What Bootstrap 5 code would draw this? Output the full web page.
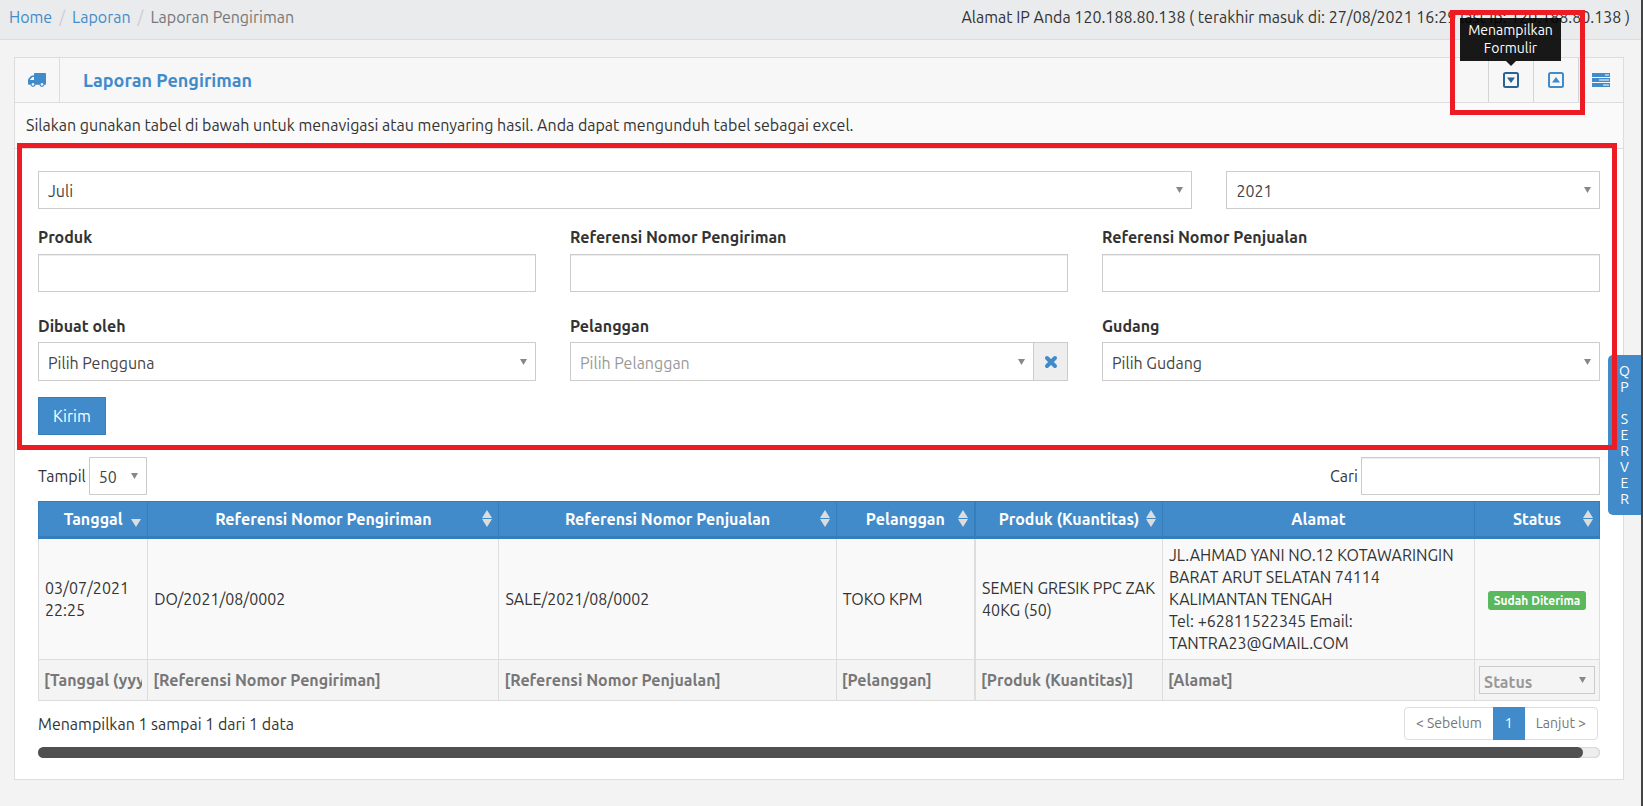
<!DOCTYPE html>
<html lang="id">
<head>
<meta charset="utf-8">
<meta name="viewport" content="width=device-width, initial-scale=1">
<title>Laporan Pengiriman</title>
<link href="https://cdn.jsdelivr.net/npm/bootstrap@5.3.0/dist/css/bootstrap.min.css" rel="stylesheet">
<style>
:root { --blue: #428bca; --blue-dark: #357ebd; --line: #dbdee0; --field: #ccc; }
body { font-family: Ubuntu, "Noto Sans", sans-serif; font-size: 16px; line-height: 22px; color: #333; background: #f3f3f3; border-right: 2px solid #444; min-height: 100vh; }
a { color: var(--blue); text-decoration: none; }
svg { display: block; }

.topbar { background: #e9ebec; border-bottom: 1px solid var(--line); padding: 6px 11px 6px 9px; height: 40px; }
.breadcrumb { --bs-breadcrumb-item-padding-x: 7px; --bs-breadcrumb-divider-color: #ccc; --bs-breadcrumb-item-active-color: #777; }

.panel { background: #fff; border: 1px solid var(--line); margin: 17px 17px 24px 14px; }
.panel-top { background: #f7f7f7; border-bottom: 1px solid var(--line); height: 45px; }
.panel-top h1 { font-size: 18px; line-height: 22px; font-weight: 700; color: var(--blue); padding-left: 23px; }
.tool { width: 45px; height: 44px; display: flex; align-items: center; justify-content: center; border: 0; border-left: 1px solid #d3d5d7; background: none; color: var(--blue); padding: 0; position: relative; }
.tool.first { border-left: 0; border-right: 1px solid var(--line); }
.tool.hovered { color: #2a6496; }
.intro { background: #fafafa; border-bottom: 1px solid var(--line); padding: 11px; height: 46px; }
.panel-main { padding: 22px 23px 21px 23px; }

.filter-form { display: grid; grid-template-columns: repeat(3, 1fr); column-gap: 34px; position: relative; }
.period { grid-column: 1 / -1; display: grid; grid-template-columns: 309fr 100fr; column-gap: 34px; margin-bottom: 17px; }
.form-label { font-weight: 700; line-height: 22px; margin-bottom: 6px; display: block; }
.form-control, .form-select { border: 1px solid var(--field); border-radius: 0; font-size: 16px; line-height: 22px; height: 38px; padding: 8px 9px 6px; color: #444; }
.form-control { box-shadow: inset 0 1px 1px rgba(0,0,0,.075); }
.form-select { background-image: url("data:image/svg+xml,%3Csvg xmlns='http://www.w3.org/2000/svg' viewBox='0 0 7 6'%3E%3Cpath d='M0 0h7L3.500 6z' fill='%23888'/%3E%3C/svg%3E"); background-size: 7px 6px; background-position: right 8px center; }
.text-row { margin-bottom: 23px; }
.pick-row { margin-bottom: 16px; }
.pick-row .form-label { margin-bottom: 5px; }
.pick-row .form-select { height: 39px; }
.is-empty { color: #999; }
.clear-btn { border: 1px solid var(--field); background: #eee; color: var(--blue); width: 35px; margin-left: -1px; padding: 0; display: flex; align-items: center; justify-content: center; }
.btn-send { --bs-btn-bg: #428bca; --bs-btn-color: #fff; --bs-btn-border-color: #357ebd; --bs-btn-border-radius: 0; --bs-btn-font-size: 16px; --bs-btn-line-height: 22px; --bs-btn-padding-x: 14px; --bs-btn-padding-y: 7px; }

.table-tools { margin: 22px 0 6px; height: 38px; }
.table-tools > div { gap: 3px; }
.length-select { width: 58px; }
.search-input { width: 239px; }

.report { table-layout: fixed; width: 100%; margin: 0; border-collapse: collapse; font-size: 16px; }
.report th, .report td { border: 1px solid #ddd; padding: 5px; vertical-align: middle; }
.report thead th { background: var(--blue); color: #fff; border-color: var(--blue-dark); border-bottom-width: 3px; text-align: center; padding: 6px 5px; }
.report tbody td { background: #f9f9f9; color: #333; padding: 5px 6px; }
.report tfoot th { background: #f4f4f4; padding: 6px 5px; height: 41px; }
.report .gap-left { border-left-width: 2px; }
.sort-cell { position: relative; }
.sort-cell .sort-icon { position: absolute; right: 6px; top: 8px; }
.foot-input { border: 0; background: none; width: 100%; padding: 0; font-weight: 700; color: #777; }
.foot-input::placeholder { color: #777; opacity: 1; }
.foot-select { height: 28px; padding: 4px 4px 2px; background-color: transparent; font-weight: 700; color: #999; }
.report .pick-cell { padding: 6px 4px; }
.tag { background: #5cb85c; font-size: 12px; line-height: 12px; padding: 4px 6px 3px; border-radius: 3px; }

.table-foot { margin-top: 6px; height: 33px; }
.pagination { --bs-pagination-font-size: 14px; --bs-pagination-color: #777; --bs-pagination-padding-x: 11px; --bs-pagination-padding-y: 5px; --bs-pagination-border-color: #ddd; --bs-pagination-active-bg: #428bca; --bs-pagination-active-border-color: #428bca; --bs-pagination-border-radius: 4px; margin: 0 2px 0 0; }
.page-link { line-height: 21px; }
.track { height: 11px; border-radius: 6px; background: #eee; box-shadow: inset 0 0 2px rgba(0,0,0,.3); margin-top: 7px; }
.thumb { height: 11px; border-radius: 6px; background: #505050; }

.tip { position: absolute; bottom: 41px; left: 50%; width: 101px; margin-left: -51px; background: rgba(0,0,0,.9); color: #fff; font-size: 14px; line-height: 18px; padding: 3px 8px 4px; text-align: center; z-index: 3; }
.tip::after { content: ""; position: absolute; top: 100%; left: 50%; margin-left: -5px; border: 5px solid transparent; border-top-color: rgba(0,0,0,.9); border-bottom: 0; }
.marker { position: absolute; border: 5px solid #ed1c24; pointer-events: none; z-index: 5; }
.marker-form { inset: -28px -17px -15px -21px; }
.marker-tools { width: 135px; height: 105px; right: 38px; top: -48px; }
.side-tab { position: absolute; right: 0; top: 355px; width: 33px; height: 160px; border: 0; border-radius: 5px 0 0 5px; background: var(--blue); color: #fff; font-size: 14px; line-height: 16px; padding: 0; white-space: pre-line; z-index: 2; }
</style>
</head>
<body class="position-relative">

<header class="topbar d-flex justify-content-between align-items-start">
  <nav aria-label="breadcrumb">
    <ol class="breadcrumb mb-0">
      <li class="breadcrumb-item"><a href="#">Home</a></li>
      <li class="breadcrumb-item"><a href="#">Laporan</a></li>
      <li class="breadcrumb-item active" aria-current="page">Laporan Pengiriman</li>
    </ol>
  </nav>
  <div>Alamat IP Anda 120.188.80.138 ( terakhir masuk di: 27/08/2021 16:29 last ip: 120.188.80.138 )</div>
</header>

<main class="panel">
  <div class="panel-top d-flex align-items-center position-relative">
    <span class="tool first">
      <svg width="18" height="15" viewBox="0 0 18 15" fill="currentColor"><path fill-rule="evenodd" d="M7 0h10.200q.8 0 .8.800V11q0 .8-.8.800h-.7a2.600 2.600 0 0 1-5.100 0H7.600a2.600 2.600 0 0 1-5.100 0H1.200Q0 11.800 0 11V7.200Q0 6 .8 5.200l2-2Q3.500 2.500 4.500 2.500H6V1q0-1 1-1zM2 7h4V4H4.500L2 6.500zM5 10a1.400 1.400 0 1 0 .01 0zM14 10a1.400 1.400 0 1 0 .01 0z"/></svg>
    </span>
    <h1 class="mb-0 me-auto">Laporan Pengiriman</h1>
    <button type="button" class="tool hovered" aria-label="Menampilkan Formulir">
      <svg width="16" height="16" viewBox="0 0 16 16"><rect x="1" y="1" width="14" height="14" rx="1.500" fill="none" stroke="currentColor" stroke-width="2"/><path d="M4 5.500h8L8 11z" fill="currentColor"/></svg>
      <span class="tip" role="tooltip">Menampilkan Formulir</span>
    </button>
    <button type="button" class="tool" aria-label="Sembunyikan Formulir">
      <svg width="16" height="16" viewBox="0 0 16 16"><rect x="1" y="1" width="14" height="14" rx="1.500" fill="none" stroke="currentColor" stroke-width="2"/><path d="M4 10.500h8L8 5z" fill="currentColor"/></svg>
    </button>
    <button type="button" class="tool" aria-label="Pilihan">
      <svg width="18" height="14" viewBox="0 0 18 14"><path d="M0 0h18v4H0zM0 5h18v4H0zM0 10h18v4H0z" fill="currentColor"/><path d="M13 1.500h4v1h-4zM7 6.500h10v1H7zM11 11.500h6v1h-6z" fill="#fff"/></svg>
    </button>
    <span class="marker marker-tools"></span>
  </div>
  <div class="intro">Silakan gunakan tabel di bawah untuk menavigasi atau menyaring hasil. Anda dapat mengunduh tabel sebagai excel.</div>

  <div class="panel-main">
    <form class="filter-form">
      <div class="period">
        <select class="form-select" aria-label="Bulan"><option>Juli</option></select>
        <select class="form-select" aria-label="Tahun"><option>2021</option></select>
      </div>
      <div class="text-row">
        <label class="form-label" for="produk">Produk</label>
        <input class="form-control" id="produk" type="text">
      </div>
      <div class="text-row">
        <label class="form-label" for="kirim-ref">Referensi Nomor Pengiriman</label>
        <input class="form-control" id="kirim-ref" type="text">
      </div>
      <div class="text-row">
        <label class="form-label" for="jual-ref">Referensi Nomor Penjualan</label>
        <input class="form-control" id="jual-ref" type="text">
      </div>
      <div class="pick-row">
        <label class="form-label" for="pengguna">Dibuat oleh</label>
        <select class="form-select" id="pengguna"><option>Pilih Pengguna</option></select>
      </div>
      <div class="pick-row">
        <label class="form-label" for="pelanggan">Pelanggan</label>
        <div class="d-flex">
          <select class="form-select is-empty" id="pelanggan"><option>Pilih Pelanggan</option></select>
          <button type="button" class="clear-btn flex-shrink-0" aria-label="Hapus pelanggan">
            <svg width="14" height="14" viewBox="0 0 14 14"><path d="M3 3l8 8M11 3l-8 8" stroke="currentColor" stroke-width="4" stroke-linecap="round"/></svg>
          </button>
        </div>
      </div>
      <div class="pick-row">
        <label class="form-label" for="gudang">Gudang</label>
        <select class="form-select" id="gudang"><option>Pilih Gudang</option></select>
      </div>
      <div><button type="submit" class="btn btn-send">Kirim</button></div>
      <span class="marker marker-form"></span>
    </form>

    <div class="table-tools d-flex justify-content-between align-items-center">
      <div class="d-flex align-items-center">
        <label for="tampil">Tampil</label>
        <select class="form-select length-select" id="tampil"><option>50</option></select>
      </div>
      <div class="d-flex align-items-center">
        <label for="cari">Cari</label>
        <input class="form-control search-input" id="cari" type="search">
      </div>
    </div>

    <table class="report">
      <colgroup>
        <col style="width:7%"><col style="width:22.5%"><col style="width:21.6%"><col style="width:8.9%"><col style="width:12%"><col style="width:20%"><col style="width:8%">
      </colgroup>
      <thead>
        <tr>
          <th class="sort-cell">Tanggal<svg class="sort-icon" width="10" height="17" viewBox="0 0 10 17"><path d="M0 9h10l-5 8z" fill="#ddd"/></svg></th>
          <th class="sort-cell">Referensi Nomor Pengiriman<svg class="sort-icon" width="10" height="17" viewBox="0 0 10 17"><path d="M0 8h10L5 0zM0 9h10l-5 8z" fill="#ddd"/></svg></th>
          <th class="sort-cell">Referensi Nomor Penjualan<svg class="sort-icon" width="10" height="17" viewBox="0 0 10 17"><path d="M0 8h10L5 0zM0 9h10l-5 8z" fill="#ddd"/></svg></th>
          <th class="sort-cell">Pelanggan<svg class="sort-icon" width="10" height="17" viewBox="0 0 10 17"><path d="M0 8h10L5 0zM0 9h10l-5 8z" fill="#ddd"/></svg></th>
          <th class="sort-cell gap-left">Produk (Kuantitas)<svg class="sort-icon" width="10" height="17" viewBox="0 0 10 17"><path d="M0 8h10L5 0zM0 9h10l-5 8z" fill="#ddd"/></svg></th>
          <th>Alamat</th>
          <th class="sort-cell">Status<svg class="sort-icon" width="10" height="17" viewBox="0 0 10 17"><path d="M0 8h10L5 0zM0 9h10l-5 8z" fill="#ddd"/></svg></th>
        </tr>
      </thead>
      <tbody>
        <tr>
          <td>03/07/2021 22:25</td>
          <td>DO/2021/08/0002</td>
          <td>SALE/2021/08/0002</td>
          <td>TOKO KPM</td>
          <td class="gap-left">SEMEN GRESIK PPC ZAK 40KG (50)</td>
          <td>JL.AHMAD YANI NO.12 KOTAWARINGIN BARAT ARUT SELATAN 74114 KALIMANTAN TENGAH<br>Tel: +62811522345 Email: TANTRA23@GMAIL.COM</td>
          <td class="text-center"><span class="badge tag">Sudah Diterima</span></td>
        </tr>
      </tbody>
      <tfoot>
        <tr>
          <th><input class="foot-input" type="text" placeholder="[Tanggal (yyyy-mm-dd)]" aria-label="Tanggal"></th>
          <th><input class="foot-input" type="text" placeholder="[Referensi Nomor Pengiriman]" aria-label="Referensi Nomor Pengiriman"></th>
          <th><input class="foot-input" type="text" placeholder="[Referensi Nomor Penjualan]" aria-label="Referensi Nomor Penjualan"></th>
          <th><input class="foot-input" type="text" placeholder="[Pelanggan]" aria-label="Pelanggan"></th>
          <th class="gap-left"><input class="foot-input" type="text" placeholder="[Produk (Kuantitas)]" aria-label="Produk (Kuantitas)"></th>
          <th><input class="foot-input" type="text" placeholder="[Alamat]" aria-label="Alamat"></th>
          <th class="pick-cell"><select class="form-select foot-select" aria-label="Status"><option>Status</option></select></th>
        </tr>
      </tfoot>
    </table>

    <div class="table-foot d-flex justify-content-between align-items-center">
      <div>Menampilkan 1 sampai 1 dari 1 data</div>
      <nav aria-label="Halaman">
        <ul class="pagination">
          <li class="page-item"><a class="page-link" href="#">&lt; Sebelum</a></li>
          <li class="page-item active"><a class="page-link" href="#">1</a></li>
          <li class="page-item"><a class="page-link" href="#">Lanjut &gt;</a></li>
        </ul>
      </nav>
    </div>
    <div class="track"><div class="thumb" style="width:98.9%"></div></div>
  </div>
</main>

<button type="button" class="side-tab" aria-label="QP Server">Q
P

S
E
R
V
E
R</button>

<script src="https://cdn.jsdelivr.net/npm/bootstrap@5.3.0/dist/js/bootstrap.bundle.min.js"></script>
</body>
</html>
